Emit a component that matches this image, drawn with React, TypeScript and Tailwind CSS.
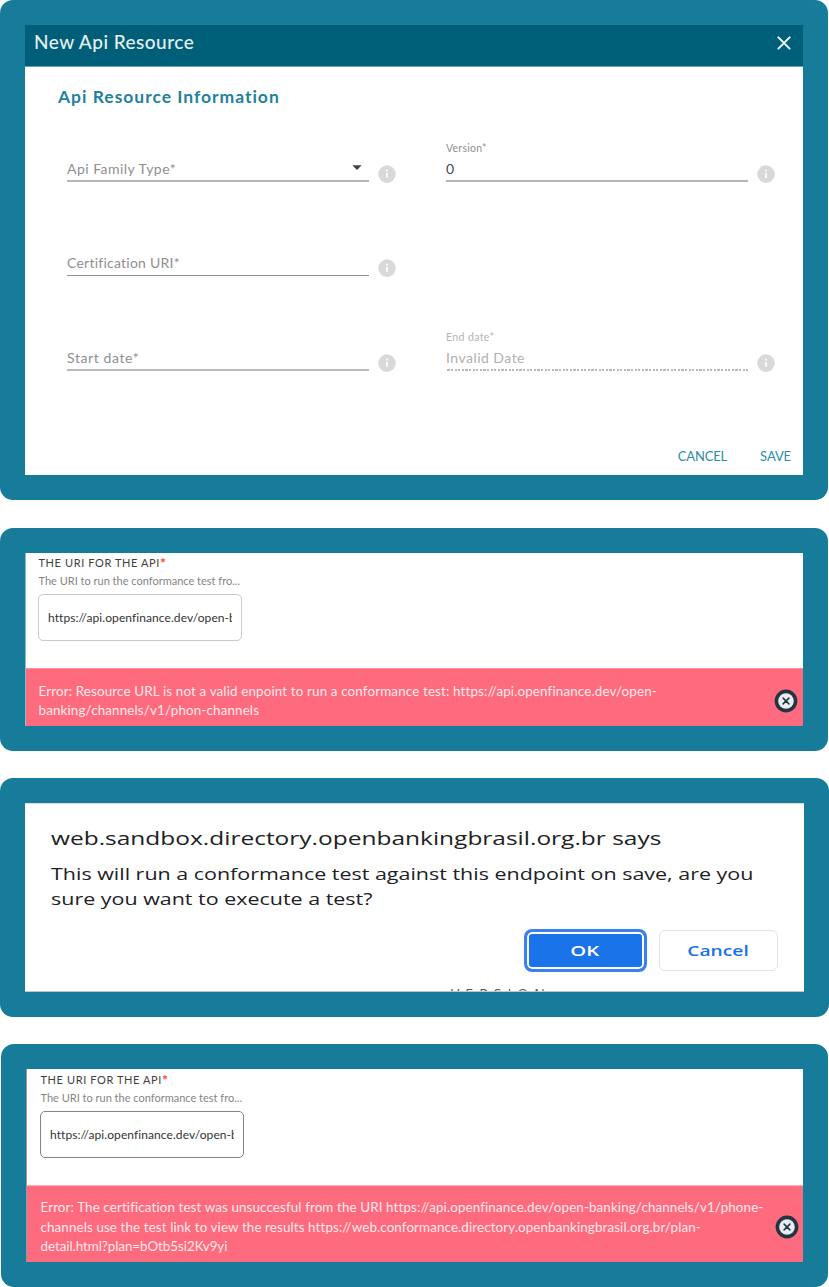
import type { ReactNode } from "react";

function InfoIcon() {
  return (
    <svg className="mt-[33px] size-[18px] shrink-0" viewBox="0 0 18 18">
      <circle cx="9" cy="9.1" r="8.8" fill="#d9d9db" />
      <circle cx="9" cy="5.6" r="1.1" fill="#fafafa" />
      <rect x="8" y="8" width="2" height="4.8" fill="#fafafa" />
    </svg>
  );
}

type FieldProps = {
  label?: string;
  children: ReactNode;
  valueClass: string;
  lineClass: string;
  labelClass?: string;
  select?: boolean;
};

function Field({ label, children, valueClass, lineClass, labelClass = "", select }: FieldProps) {
  return (
    <div className="flex h-[50px] items-start gap-[9px]">
      <div className="flex w-[302px] flex-col pt-[9px]">
        <div className={`h-[14px] text-[10.5px] leading-[14px] ${labelClass}`}>{label}</div>
        <div className="mt-[4px] flex h-5 items-center justify-between">
          <span className={`text-[14px] leading-5 whitespace-nowrap ${valueClass}`}>{children}</span>
          {select && (
            <svg className="mr-[7px] mb-[4px] h-[5px] w-[10px]" viewBox="0 0 10 5">
              <path d="M0.3 0.2h9.4L5 4.9z" fill="#444" />
            </svg>
          )}
        </div>
        <div className={lineClass} />
      </div>
      <InfoIcon />
    </div>
  );
}

function ResourceDialog() {
  return (
    <section className="h-[500px] w-[828px] rounded-[13px] bg-[#177c99] p-[25px]">
      <div className="flex h-[450px] flex-col bg-white">
        <header className="flex h-[41px] shrink-0 items-center justify-between bg-[#005f78] pr-[12px] pb-[6px] pl-[9px]">
          <h1 className="-mt-px text-[19px] leading-6 font-medium tracking-[0.47px] text-[#e6eff2]">New Api Resource</h1>
          <svg className="size-[14px]" viewBox="0 0 14 14" stroke="#f2f7f8" strokeWidth="2" strokeLinecap="round">
            <path d="M1.4 1.4 12.6 12.6M12.6 1.4 1.4 12.6" />
          </svg>
        </header>
        <div className="h-px shrink-0 bg-[#6ba3b2]" />
        <h2 className="mt-[18px] pl-[33px] text-[17.5px] leading-6 font-bold tracking-[0.98px] text-[#1f819b]">
          Api Resource Information
        </h2>
        <div className="mt-[23px] grid grid-cols-[379px_1fr] grid-rows-[94px_95px_50px] pl-[42px] text-[#8f8f8f]">
          <Field select valueClass="tracking-[0.48px]" lineClass="mt-px h-[2px] bg-[#b5b5b5]">
            Api Family Type*
          </Field>
          <Field
            label="Version*"
            labelClass="tracking-[0.25px]"
            valueClass="text-[#484848]"
            lineClass="mt-px h-[2px] bg-[#b5b5b5]"
          >
            0
          </Field>
          <Field valueClass="tracking-[0.24px]" lineClass="mt-[2px] h-px bg-[#929292]">
            Certification URI*
          </Field>
          <div />
          <Field valueClass="tracking-[0.6px]" lineClass="mt-px h-[2px] bg-[#bababa]">
            Start date*
          </Field>
          <Field
            label="End date*"
            labelClass="tracking-[0.39px] text-[#b5b5b5]"
            valueClass="tracking-[0.47px] text-[#b0b0b0]"
            lineClass="mt-px h-[2px] bg-[repeating-linear-gradient(90deg,#fff_0_1.4px,#b8b8b8_1.4px_3.6px)]"
          >
            Invalid Date
          </Field>
        </div>
        <div className="mt-[75px] flex justify-end gap-[33px] pr-[12px] text-[13px] leading-5 text-[#2b8ba4]">
          <button className="tracking-[-0.15px]">CANCEL</button>
          <button className="tracking-[-0.1px]">SAVE</button>
        </div>
      </div>
    </section>
  );
}

function CloseBadge() {
  return (
    <svg className="size-[24px] shrink-0" viewBox="0 0 24 24">
      <circle cx="12" cy="12" r="11.4" fill="#243441" />
      <circle cx="12" cy="12" r="7.8" fill="#e9edf2" />
      <path d="M9.1 9.1l5.8 5.8M14.9 9.1l-5.8 5.8" stroke="#243441" strokeWidth="1.5" strokeLinecap="round" />
    </svg>
  );
}

function UriForm({ inputClass }: { inputClass: string }) {
  return (
    <>
      <div className="flex h-[16px] pl-[0.5px] text-[11px] leading-4 tracking-[0.6px] whitespace-nowrap text-[#3f3f3f]">
        <span>THE URI FOR THE API</span>
        <span className="text-[14px] leading-4 font-bold text-[#ff3b30]">*</span>
      </div>
      <div className="mt-[2px] h-[16px] pl-[0.5px] text-[11px] leading-4 whitespace-nowrap text-[#858585]">
        The URI to run the conformance test fro...
      </div>
      <div className={`mt-[5px] flex h-[47px] w-[204px] items-center rounded-[5px] border px-[9px] ${inputClass}`}>
        <span className="w-[186px] overflow-hidden text-[12px] leading-5 tracking-[0.08px] whitespace-nowrap text-[#333]">
          https://api.openfinance.dev/open-b
        </span>
      </div>
    </>
  );
}

function InvalidUrlPanel() {
  return (
    <section className="mt-[28px] h-[223px] w-[828px] rounded-[13px] bg-[#177c99] p-[25px]">
      <div className="h-[173px] border-l border-[#8cbccb] bg-white pt-[2px]">
        <div className="h-[113px] pl-[12px]">
          <UriForm inputClass="border-[#cacaca]" />
        </div>
        <div className="flex h-[58px] items-start justify-between border-t border-[#ff8f9f] bg-[#ff6b7e] pr-[5.5px] pl-[12.5px]">
          <p className="pt-[12.5px] text-[13.4px] leading-[19.5px] whitespace-nowrap text-[#ffe9ec]">
            <span className="block tracking-[0.142px]">
              Error: Resource URL is not a valid enpoint to run a conformance test: https://api.openfinance.dev/open-
            </span>
            <span className="block tracking-[0.142px]">banking/channels/v1/phon-channels</span>
          </p>
          <div className="pt-[20px]">
            <CloseBadge />
          </div>
        </div>
      </div>
    </section>
  );
}

function ConfirmPanel() {
  return (
    <section className="mt-[27px] h-[239px] w-[829px] rounded-[13px] bg-[#177c99] p-[25px]">
      <div className="flex h-[189px] flex-col overflow-hidden border-y border-t-[#dcdcdc] border-b-[#c4c4c4] bg-white font-['Open_Sans',sans-serif] text-[#202124]">
        <h2 className="mt-[20px] ml-[25.5px] w-max origin-left scale-x-[1.288] text-[19px] leading-7">
          web.sandbox.directory.openbankingbrasil.org.br says
        </h2>
        <p className="mt-[9px] ml-[25.5px] w-max origin-left scale-x-[1.3] text-[16.5px] leading-[25px] whitespace-nowrap">
          This will run a conformance test against this endpoint on save, are you
          <br />
          sure you want to execute a test?
        </p>
        <div className="mt-[18px] flex h-[43px] shrink-0 items-center justify-end gap-[12px] pr-[26px] text-[15px] font-semibold">
          <button className="flex h-[43px] w-[123px] items-center justify-center rounded-[8px] border-[3px] border-[#3b80f0] bg-[#1a73e8] p-0 pr-[2px] text-white shadow-[inset_0_0_0_2px_#fff]">
            <span className="scale-x-[1.35]">OK</span>
          </button>
          <button className="flex h-[41px] w-[119px] items-center justify-center rounded-[6px] border border-[#e2e4e7] text-[#1a6fe8]">
            <span className="scale-x-[1.28]">Cancel</span>
          </button>
        </div>
        <div className="mt-[12px] ml-[426px] h-[20px] w-max shrink-0 text-[14px] leading-[20px] tracking-[6px] text-[#555]">
          VERSION
        </div>
      </div>
    </section>
  );
}

function FailedTestPanel() {
  return (
    <section className="mt-[27px] ml-px h-[243px] w-[827px] rounded-[13px] bg-[#177c99] p-[25px]">
      <div className="h-[193px] border-l border-[#999] bg-white pt-[3px]">
        <div className="h-[113px] pl-[13px]">
          <UriForm inputClass="border-[#858585]" />
        </div>
        <div className="flex h-[77px] items-start justify-between border-t border-[#ffb3be] bg-[#ff6b7e] pr-[4.5px] pl-[13.5px]">
          <p className="pt-[12px] text-[13.4px] leading-[19.6px] whitespace-nowrap text-[#ffe9ec]">
            <span className="block tracking-[0.112px]">
              Error: The certification test was unsuccesful from the URI https://api.openfinance.dev/open-banking/channels/v1/phone-
            </span>
            <span className="block tracking-[0.107px]">
              channels use the test link to view the results https://web.conformance.directory.openbankingbrasil.org.br/plan-
            </span>
            <span className="block tracking-[-0.05px]">detail.html?plan=bOtb5si2Kv9yi</span>
          </p>
          <div className="pt-[29px]">
            <CloseBadge />
          </div>
        </div>
      </div>
    </section>
  );
}

export default function App() {
  return (
    <main className="h-[1287px] w-[829px] overflow-hidden bg-white font-['Lato',sans-serif]">
      <ResourceDialog />
      <InvalidUrlPanel />
      <ConfirmPanel />
      <FailedTestPanel />
    </main>
  );
}
